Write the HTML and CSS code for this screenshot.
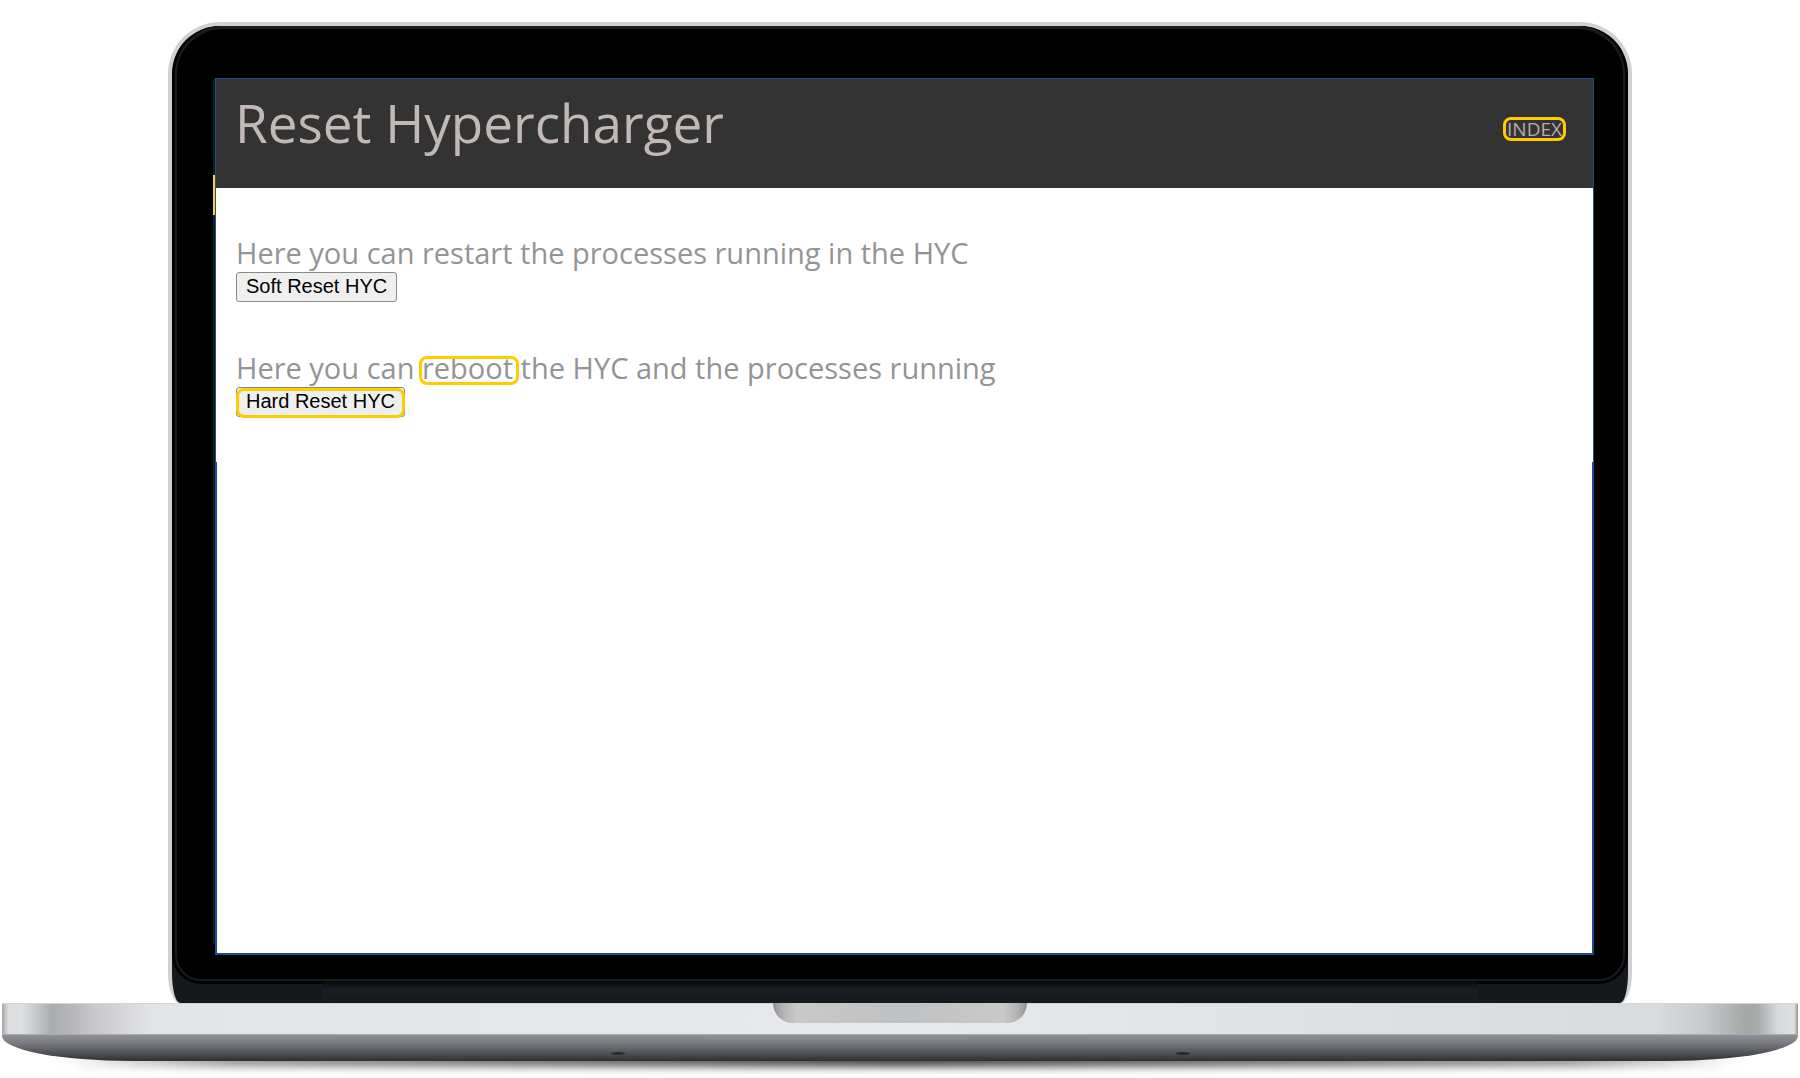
FILE: index.html
```html
<!DOCTYPE html>
<html lang="en">
<head>
    <meta charset="UTF-8">
    <meta name="viewport" content="width=device-width, initial-scale=1.0">
    <title>Reset Hypercharger</title>
    <link rel="stylesheet" href="styles.css">
</head>
<body>
    <div class="lid">
        <div class="glass">
            <div class="display">
                <div class="page">
                    <header class="header">
                        <h1>Reset Hypercharger</h1>
                        <a href="#" class="index-link">INDEX</a>
                    </header>
                    <main class="content">
                        <section class="reset-group">
                            <p>Here you can restart the processes running in the HYC</p>
                            <button type="button" class="reset-button">Soft Reset HYC</button>
                        </section>
                        <section class="reset-group">
                            <p>Here you can <span class="highlight">reboot</span> the HYC and the processes running</p>
                            <button type="button" class="reset-button marked">Hard Reset HYC</button>
                        </section>
                    </main>
                </div>
            </div>
        </div>
        <div class="hinge"></div>
    </div>

    <div class="base">
        <div class="deck">
            <div class="notch"></div>
        </div>
        <div class="underside">
            <span class="foot"></span>
            <span class="foot"></span>
        </div>
    </div>
</body>
</html>
```

FILE: styles.css
```css
* {
    box-sizing: border-box;
}

body {
    display: flex;
    flex-direction: column;
    min-height: 100vh;
    margin: 0;
    padding: 22px 2px 17px;
    background-color: #fff;
    font-family: "Open Sans", sans-serif;
    color: #949494;
}

/* laptop lid */
.lid {
    flex: 1;
    display: flex;
    flex-direction: column;
    margin: 0 166px;
    border: 4px solid #cfd1d5;
    border-bottom: none;
    border-radius: 52px 52px 12px 12px / 52px 52px 30px 30px;
    background-color: #15191c;
    overflow: hidden;
}

.glass {
    flex: 1;
    display: flex;
    margin: 0 3px;
    padding: 49px 29px 24px 38px;
    border: 2px solid #1b1c1e;
    border-top-width: 3px;
    border-radius: 48px 48px 26px 26px;
    background-color: #000;
    box-shadow: 0 0 0 3px #030304;
}

.display {
    position: relative;
    flex: 1;
    border: 2px solid #1f4a94;
    border-top-width: 1px;
    background-color: #fff;
}

/* thin strip along the left edge of the display */
.display::before,
.display::after {
    content: "";
    position: absolute;
    left: -4px;
    width: 2px;
}

.display::before {
    top: 0;
    bottom: 9px;
    background-color: #0a211c;
}

.display::after {
    top: 96px;
    height: 40px;
    background-color: #fad41e;
}

.hinge {
    height: 22px;
    margin: 0 150px;
    border-radius: 4px 4px 0 0;
    background: linear-gradient(#07080d, #1b1e23 40%, #15191c);
}

/* web page on the display */
.page {
    margin: 0 -1px;
    background-color: #fff;
}

.header {
    display: flex;
    justify-content: space-between;
    align-items: center;
    height: 109px;
    padding: 0 27px 9px 19px;
    background-color: #333;
}

h1 {
    margin: 0;
    padding-bottom: 12px;
    font-size: 53px;
    font-weight: 400;
    line-height: 72px;
    color: #c1b9b5;
}

.index-link {
    padding: 0 1px;
    border: 3px solid #fc0;
    border-radius: 8px;
    font-size: 19px;
    line-height: 18px;
    color: #b5adaa;
    text-decoration: none;
}

.content {
    padding: 46px 20px 45px;
}

.reset-group + .reset-group {
    margin-top: 47px;
}

.reset-group p {
    margin: 0;
    font-size: 29px;
    line-height: 38px;
}

.reset-button {
    position: relative;
    display: block;
    height: 30px;
    padding: 0 9px 2px;
    border: 1px solid #8a8a8a;
    border-radius: 3px;
    background-color: #efefef;
    font-family: "Liberation Sans", Arial, sans-serif;
    font-size: 20px;
    line-height: 26px;
    color: #000;
}

.highlight {
    position: relative;
}

.highlight::after,
.marked::after {
    content: "";
    position: absolute;
    border: 3px solid #fc0;
    border-radius: 8px;
}

.highlight::after {
    inset: 8px -6px 2px -3px;
}

.marked::after {
    inset: 0 -1px -2px;
}

/* laptop base */
.base {
    position: relative;
}

.base::before {
    content: "";
    position: absolute;
    z-index: -1;
    right: 60px;
    bottom: -6px;
    left: 60px;
    height: 14px;
    background: linear-gradient(90deg, transparent, #999 10%, #444 50%, #999 90%, transparent);
    filter: blur(4px);
}

.deck {
    height: 32px;
    border-top: 1px solid #d5d7d7;
    border-bottom: 1px solid #a9aaae;
    background: linear-gradient(90deg, #a5a6a8 0, #dcdddf 6px, #dfe0e2 20px, #aaacae 50px, #b5b6b9 68px, #cacace 95px, #e3e4e7 150px, #e8e9eb 50%, #d9dadd calc(100% - 140px), #c9cacc calc(100% - 95px), #a5a6a6 calc(100% - 52px), #a9abab calc(100% - 40px), #d8d9dc calc(100% - 20px), #dedfe1 calc(100% - 4px), #929397 100%);
}

.notch {
    width: 254px;
    height: 20px;
    margin: -1px auto 0;
    border-radius: 0 0 20px 20px;
    background: linear-gradient(90deg, #8f9095, #b4b4b6 10px, #c9c9ca 24px, #bfc0c1 50%, #c9c9ca calc(100% - 24px), #b4b4b6 calc(100% - 10px), #8f9095);
}

.underside {
    display: flex;
    justify-content: center;
    gap: 551px;
    height: 26px;
    padding-top: 17px;
    border-radius: 0 0 130px 130px / 0 0 25px 25px;
    background: linear-gradient(#909196, #7b7c81 30%, #505156 70%, #2e2f32);
}

.foot {
    width: 14px;
    height: 3px;
    border-radius: 50%;
    background-color: #27282c;
}
```
